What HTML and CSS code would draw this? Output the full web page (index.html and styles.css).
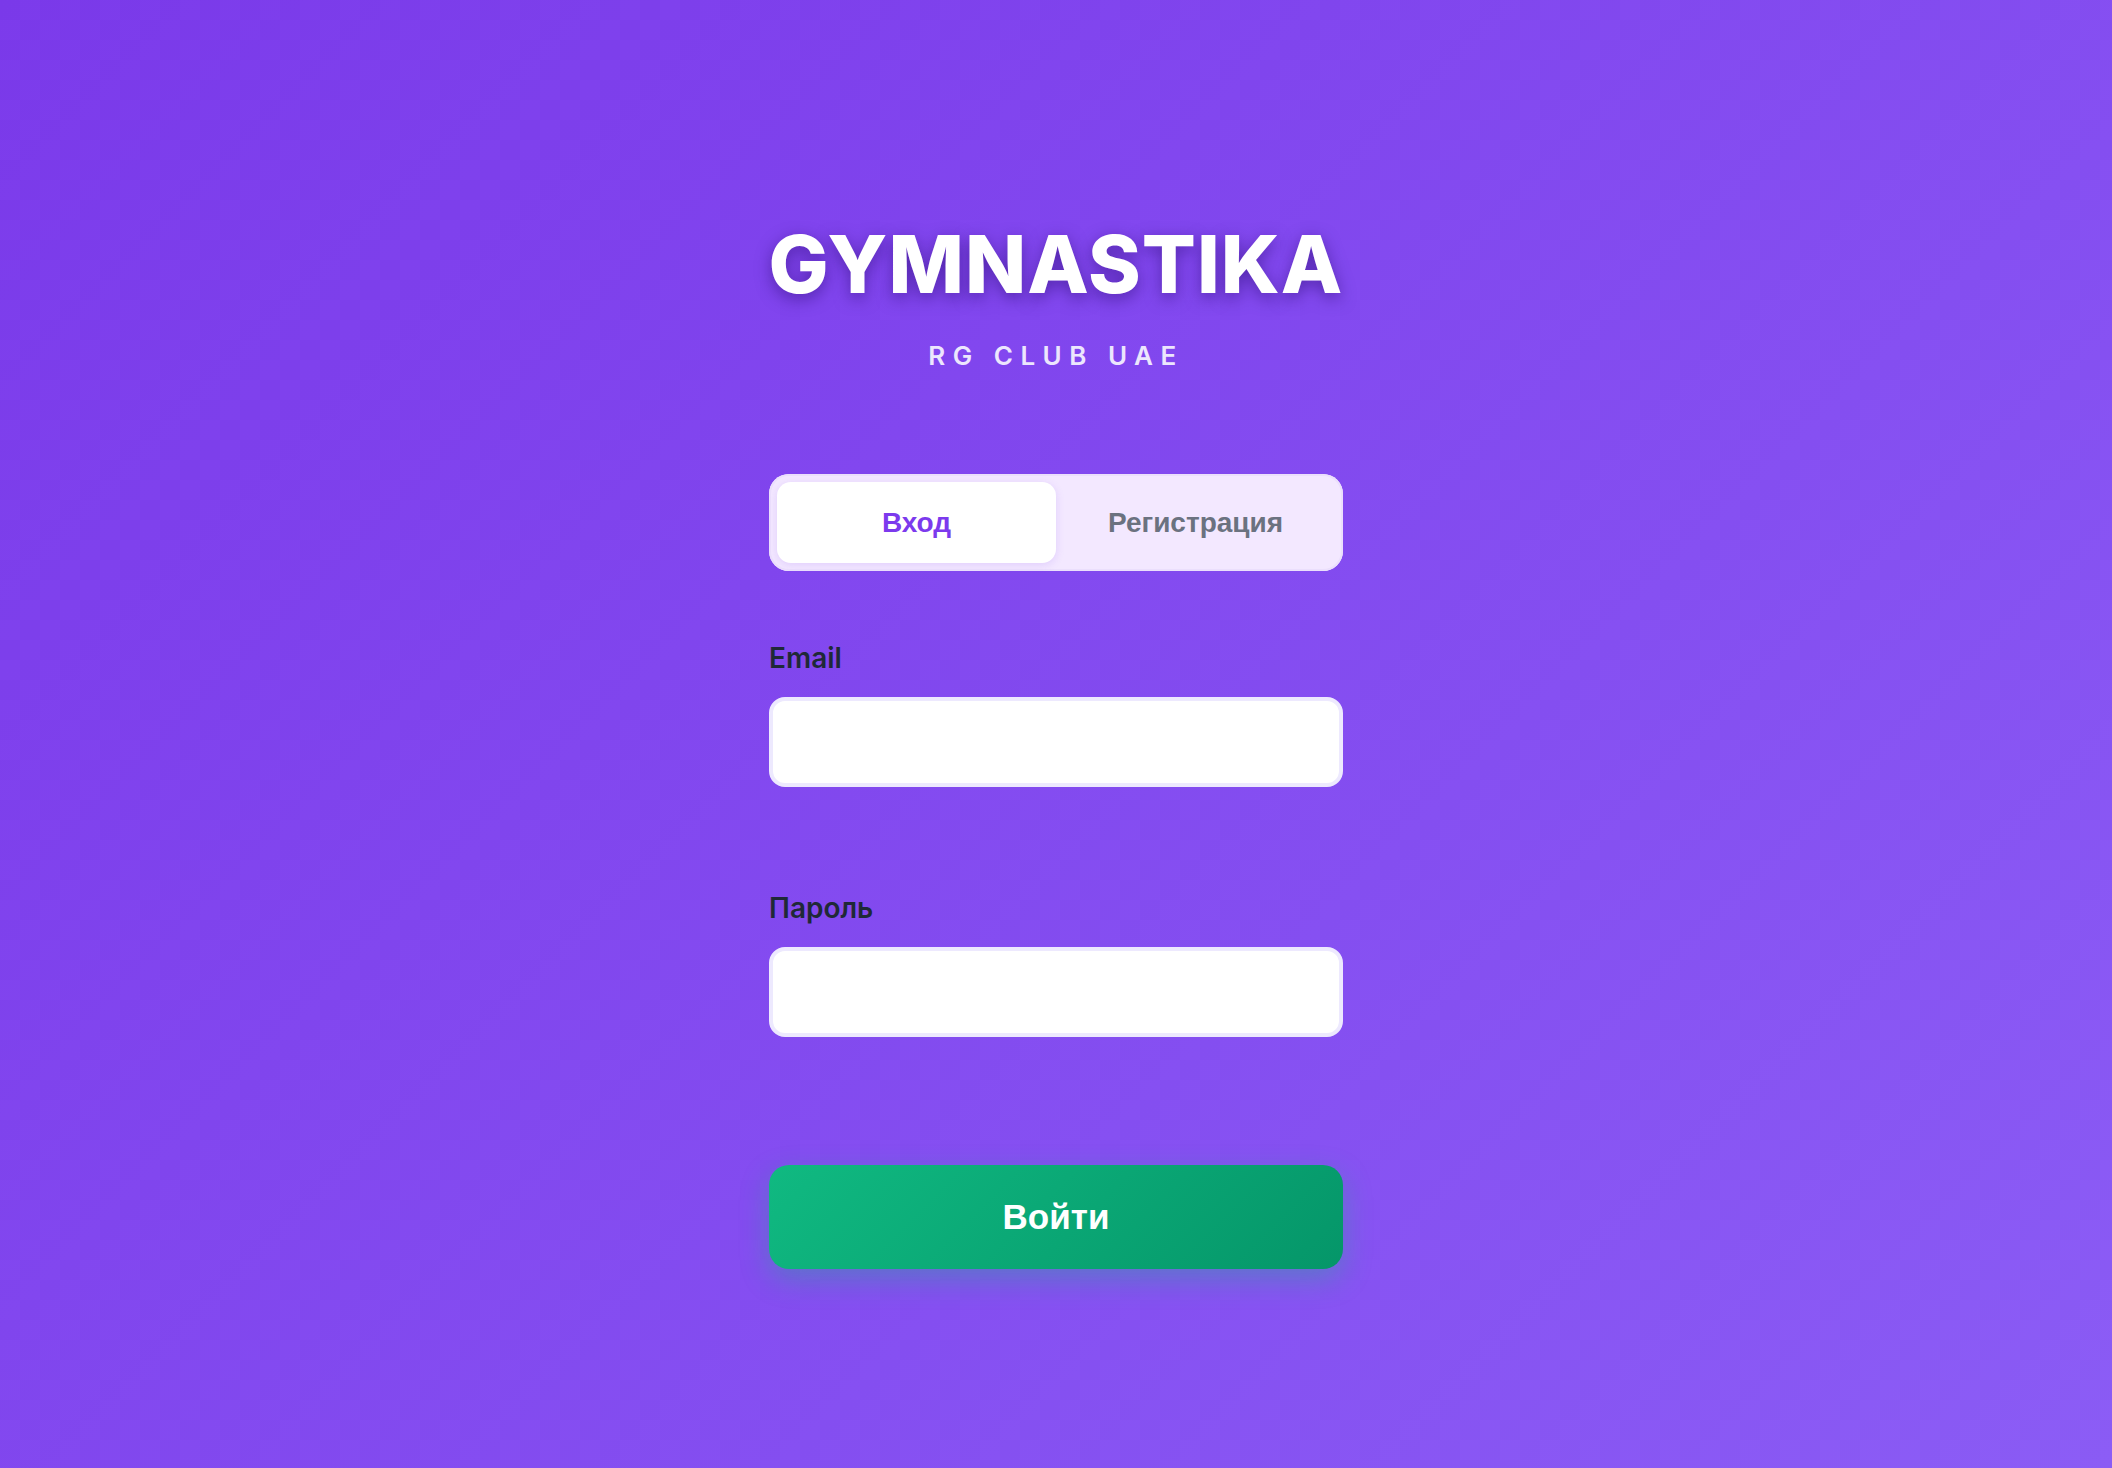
FILE: index.html
```html
<!DOCTYPE html>
<html lang="ru">
<head>
<meta charset="utf-8">
<title>GYMNASTIKA — RG CLUB UAE</title>
<link rel="stylesheet" href="styles.css">
</head>
<body>
<main class="page">
  <header class="brand">
    <h1 class="brand-title">GYMNASTIKA</h1>
    <p class="brand-sub">RG CLUB UAE</p>
  </header>

  <div class="tabs">
    <button class="tab tab-active" type="button">Вход</button>
    <button class="tab" type="button">Регистрация</button>
  </div>

  <form class="form">
    <div class="field">
      <label class="field-label" for="email">Email</label>
      <input class="field-input" id="email" type="email">
    </div>
    <div class="field">
      <label class="field-label" for="password">Пароль</label>
      <input class="field-input" id="password" type="password">
    </div>
    <button class="submit" type="button">Войти</button>
  </form>
</main>
</body>
</html>
```

FILE: styles.css
```css
* { box-sizing: border-box; }

html, body { height: 100%; }

body {
  margin: 0;
  min-height: 100vh;
  font-family: Inter, "Noto Sans", "Liberation Sans", sans-serif;
  background-color: #7c3aed;
  background-image:
    repeating-conic-gradient(rgba(255,255,255,0.009) 0 25%, rgba(0,0,0,0.006) 0 50%),
    linear-gradient(135deg, #7b39eb 0%, #8b5cf6 100%);
  background-size: 40px 40px, 100% 100%;
}

.page {
  display: flex;
  flex-direction: column;
  align-items: center;
  padding-top: 224px;
}

.brand { text-align: center; }

.brand-title {
  margin: 0;
  font-family: Inter, "Liberation Sans", sans-serif;
  font-size: 80px;
  line-height: 80px;
  font-weight: 800;
  letter-spacing: 1px;
  color: #ffffff;
  text-shadow: 0 5px 16px rgba(40, 10, 110, 0.5);
}

.brand-sub {
  margin: 39px 0 0;
  font-size: 26px;
  line-height: 25px;
  font-weight: 600;
  letter-spacing: 7.5px;
  color: #ece6fd;
}

.tabs {
  margin-top: 106px;
  width: 574px;
  height: 97px;
  padding: 8px;
  display: flex;
  background: #f3e8ff;
  border-radius: 20px;
  box-shadow: inset 0 0 0 2px #ebdffc;
}

.tab {
  flex: 1;
  border: 0;
  background: transparent;
  border-radius: 14px;
  font-family: "Liberation Sans", Arial, sans-serif;
  font-size: 28px;
  font-weight: 700;
  color: #6b7280;
  cursor: pointer;
}

.tab-active {
  background: #ffffff;
  color: #7c3aed;
  box-shadow: 0 2px 8px rgba(124, 58, 237, 0.15);
}

.form {
  width: 574px;
  margin-top: 73px;
  display: flex;
  flex-direction: column;
}

.field {
  display: flex;
  flex-direction: column;
  margin-bottom: 107px;
}

.field + .field { margin-bottom: 128px; }

.field-label {
  font-size: 28px;
  line-height: 28px;
  font-weight: 600;
  color: #1f2937;
  margin-bottom: 25px;
}

.field-input {
  height: 90px;
  border: 4px solid #ede9fe;
  border-radius: 16px;
  background: #ffffff;
  font-size: 26px;
  padding: 0 20px;
  outline: none;
}

.submit {
  height: 104px;
  border: 0;
  border-radius: 20px;
  background: linear-gradient(135deg, #10b981 0%, #059669 100%);
  box-shadow: 0 10px 28px rgba(16, 185, 129, 0.35);
  font-family: "Liberation Sans", Arial, sans-serif;
  font-size: 35px;
  font-weight: 700;
  color: #ffffff;
  cursor: pointer;
}
```
